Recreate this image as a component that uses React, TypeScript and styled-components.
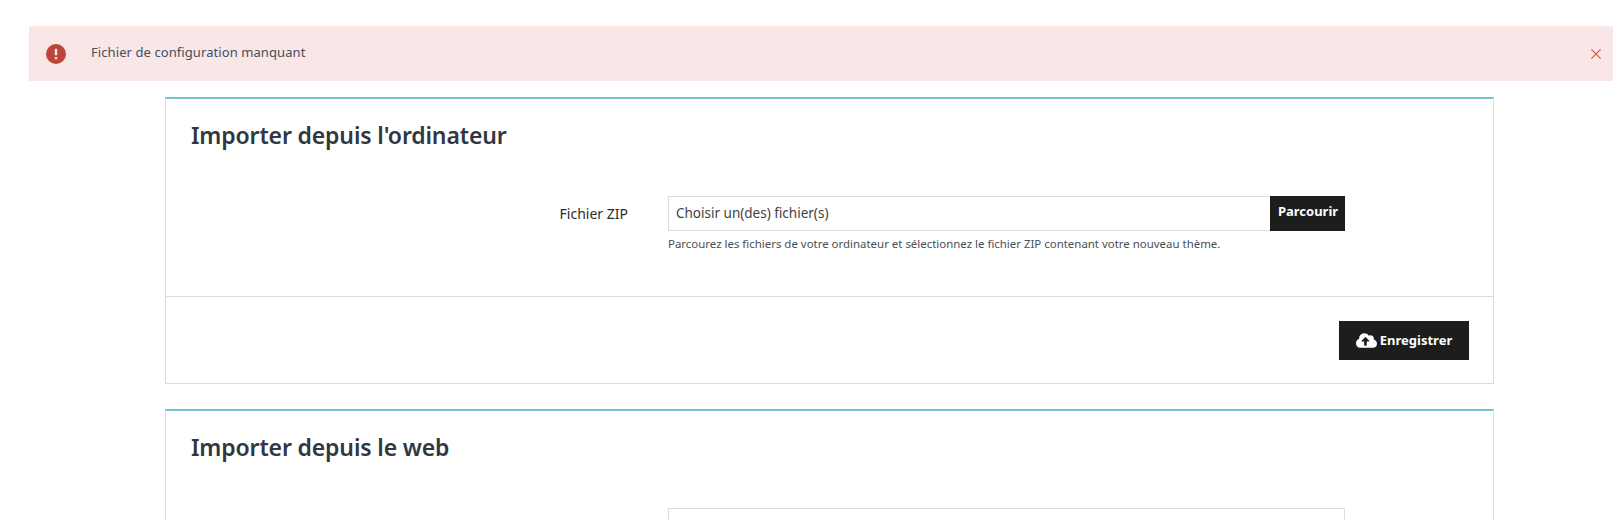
import React from 'react';
import styled, { createGlobalStyle } from 'styled-components';
import { FaCloudUploadAlt } from 'react-icons/fa';

const GlobalStyle = createGlobalStyle`
  html, body {
    margin: 0;
    padding: 0;
    height: 520px;
    overflow: hidden;
    background: #fff;
    font-family: "Noto Sans", Roboto, sans-serif;
  }
  * {
    box-sizing: border-box;
  }
`;

const Alert = styled.div`
  display: flex;
  align-items: center;
  height: 55px;
  margin: 26px 0 16px 29px;
  padding: 0 12px 0 17px;
  background: #f9e6e6;
  color: #454f5e;
  font-size: 13px;
`;

const AlertIcon = styled.svg`
  width: 20px;
  height: 20px;
  margin-right: 25px;
  flex: none;
`;

const AlertText = styled.span`
  flex: 1;
  padding-bottom: 3px;
  letter-spacing: 0.08px;
`;

const CloseIcon = styled.svg`
  width: 10px;
  height: 10px;
  flex: none;
`;

const Content = styled.main`
  display: flex;
  flex-direction: column;
  gap: 25px;
  padding: 0 119px 0 165px;
`;

const Card = styled.section`
  border: 1px solid #dcdcdc;
  border-top: 2px solid #76c3d6;
  background: #fff;
`;

const CardTitle = styled.h2`
  margin: 0;
  padding: 20px 25px 0;
  height: 97px;
  color: #32373f;
  font-size: 23px;
  font-weight: 600;
  letter-spacing: -0.15px;
  line-height: 32px;
`;

const FormRow = styled.div`
  display: grid;
  grid-template-columns: 462px 677px;
  column-gap: 40px;
  padding-bottom: 45px;
`;

const Label = styled.label`
  height: 35px;
  line-height: 35px;
  text-align: right;
  color: #2b2b2b;
  font-size: 14px;
`;

const FileInput = styled.div`
  display: flex;
  height: 35px;
`;

const FileName = styled.div<{ $closed?: boolean }>`
  flex: 1;
  padding-left: 7px;
  line-height: 33px;
  border: 1px solid #dcdcdc;
  border-right-width: ${(p) => (p.$closed ? '1px' : '0')};
  color: #3f3f3f;
  font-size: 13.5px;
`;

const BrowseButton = styled.button`
  width: 75px;
  padding: 0 0 5px 1px;
  border: 0;
  background: #1d1d1b;
  color: #fff;
  font: 700 13px "Noto Sans", Roboto, sans-serif;
`;

const Hint = styled.p`
  margin: 5px 0 0;
  color: #4a4f57;
  font-size: 11.45px;
  line-height: 15px;
`;

const CardFooter = styled.footer`
  display: flex;
  justify-content: flex-end;
  padding: 24px 24px 23px;
  border-top: 1px solid #dcdcdc;
`;

const SaveButton = styled.button`
  display: flex;
  align-items: center;
  justify-content: center;
  gap: 3px;
  width: 130px;
  height: 39px;
  padding: 0 0 2px;
  border: 0;
  background: #1d1d1b;
  color: #fff;
  font: 700 13px "Noto Sans", Roboto, sans-serif;

  svg {
    width: 21px;
    height: 17px;
    margin-top: 2px;
  }
`;

const App: React.FC = () => {
  return (
    <>
      <GlobalStyle />
      <Alert>
        <AlertIcon viewBox="0 0 20 20">
          <circle cx="10" cy="10" r="10" fill="#bc4639" />
          <rect x="8.8" y="4.8" width="2.4" height="6.8" rx="0.8" fill="#f9e6e6" />
          <rect x="8.8" y="12.9" width="2.4" height="2.4" rx="0.6" fill="#f9e6e6" />
        </AlertIcon>
        <AlertText>Fichier de configuration manquant</AlertText>
        <CloseIcon viewBox="0 0 10 10">
          <path d="M0.4 0.4 L9.6 9.6 M9.6 0.4 L0.4 9.6" stroke="#ee4b3c" strokeWidth="1.1" fill="none" />
        </CloseIcon>
      </Alert>
      <Content>
        <Card>
          <CardTitle>Importer depuis l'ordinateur</CardTitle>
          <FormRow>
            <Label>Fichier ZIP</Label>
            <div>
              <FileInput>
                <FileName>Choisir un(des) fichier(s)</FileName>
                <BrowseButton type="button">Parcourir</BrowseButton>
              </FileInput>
              <Hint>Parcourez les fichiers de votre ordinateur et sélectionnez le fichier ZIP contenant votre nouveau thème.</Hint>
            </div>
          </FormRow>
          <CardFooter>
            <SaveButton type="button">
              <FaCloudUploadAlt />
              Enregistrer
            </SaveButton>
          </CardFooter>
        </Card>
        <Card>
          <CardTitle>Importer depuis le web</CardTitle>
          <FormRow>
            <Label />
            <FileInput>
              <FileName $closed />
            </FileInput>
          </FormRow>
        </Card>
      </Content>
    </>
  );
};

export default App;
